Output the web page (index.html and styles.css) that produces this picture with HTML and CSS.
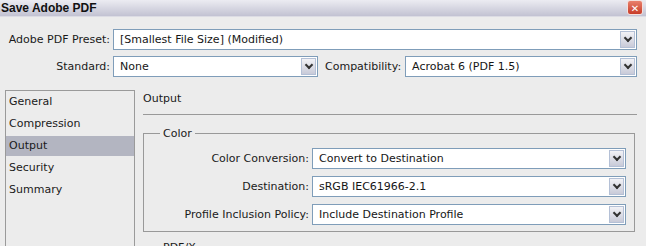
FILE: index.html
```html
<!DOCTYPE html>
<html lang="en">
<head>
    <meta charset="UTF-8">
    <title>Save Adobe PDF</title>
    <link rel="stylesheet" href="styles.css">
</head>
<body>
    <div class="titlebar">
        <span class="title">Save Adobe PDF</span>
        <span class="close">&#x2715;</span>
    </div>
    <div class="dialog">
        <div class="row">
            <label class="lbl">Adobe PDF Preset:</label>
            <div class="combo wide"><span>[Smallest File Size] (Modified)</span><i class="arrow"></i></div>
        </div>
        <div class="row">
            <label class="lbl">Standard:</label>
            <div class="combo std"><span>None</span><i class="arrow"></i></div>
            <label class="lbl2">Compatibility:</label>
            <div class="combo wide"><span>Acrobat 6 (PDF 1.5)</span><i class="arrow"></i></div>
        </div>
        <div class="main">
            <ul class="sections">
                <li>General</li>
                <li>Compression</li>
                <li class="active">Output</li>
                <li>Security</li>
                <li>Summary</li>
            </ul>
            <div class="panel">
                <div class="panel-title">Output</div>
                <fieldset class="group">
                    <legend>Color</legend>
                    <div class="frow">
                        <label class="flbl">Color Conversion:</label>
                        <div class="combo wide"><span>Convert to Destination</span><i class="arrow"></i></div>
                    </div>
                    <div class="frow">
                        <label class="flbl">Destination:</label>
                        <div class="combo wide"><span>sRGB IEC61966-2.1</span><i class="arrow"></i></div>
                    </div>
                    <div class="frow">
                        <label class="flbl">Profile Inclusion Policy:</label>
                        <div class="combo wide"><span>Include Destination Profile</span><i class="arrow"></i></div>
                    </div>
                </fieldset>
                <fieldset class="group">
                    <legend>PDF/X</legend>
                </fieldset>
            </div>
        </div>
    </div>
</body>
</html>
```

FILE: styles.css
```css
html, body { margin: 0; padding: 0; }
body { background: #ececec; font-family: "DejaVu Sans", sans-serif; font-size: 11px; color: #1a1a1a; overflow: hidden; width: 646px; height: 246px; }

.titlebar { height: 16px; display: flex; align-items: center; justify-content: space-between; background: linear-gradient(#ececf2, #c2c2d2); border-bottom: 1px solid #dcdce4; padding-left: 1px; }
.title { font-family: "Liberation Sans", sans-serif; font-weight: bold; font-size: 12px; color: #111; }
.close { width: 16px; height: 15px; margin-right: 3px; margin-top: -1px; background: linear-gradient(#e8806c, #c83c28); border: 1px solid #f4e0dc; border-radius: 3px; color: #fff; font-size: 10px; font-weight: bold; line-height: 15px; text-align: center; box-sizing: border-box; }

.dialog { padding: 12px 9px 0 5px; }
.row { display: flex; align-items: center; height: 21px; margin-bottom: 6px; }
.lbl { width: 105px; text-align: right; padding-right: 3px; }
.lbl2 { margin: 0 4px 0 7px; }

.combo { height: 21px; box-sizing: border-box; border: 1px solid #7f9db9; background: #fff; display: flex; align-items: center; justify-content: space-between; padding: 1px 1px 1px 6px; }
.combo span { white-space: nowrap; color: #161616; }
.wide { flex: 1; }
.std { width: 205px; }
.arrow { width: 15px; height: 17px; box-sizing: border-box; border: 1px solid #b4c0d6; background: linear-gradient(#f2f2f6, #c8cad8); position: relative; }
.arrow::after { content: ""; position: absolute; left: 4px; top: 3px; width: 4px; height: 4px; border-right: 2px solid #333; border-bottom: 2px solid #333; transform: rotate(45deg); }

.main { display: flex; margin-top: 13px; }
.sections { list-style: none; margin: 0; padding: 1px 0 0; width: 128px; height: 200px; border: 1px solid #9a9a9a; display: flex; flex-direction: column; gap: 2px; }
.sections li { height: 20px; line-height: 20px; padding-left: 3px; }
.sections li.active { background: #b3b5c1; }

.panel { flex: 1; margin-left: 8px; }
.panel-title { box-sizing: border-box; height: 25px; padding-top: 1px; line-height: 16px; border-bottom: 1px solid #999; }
.group { margin: 12px 2px 0 0; padding: 8px 8px 6px 0; border: 1px solid #999; }
.group + .group { margin-top: 9px; }
.group legend { padding: 0 3px; margin-left: 16px; }
.frow { display: flex; align-items: center; margin-bottom: 7px; }
.frow:last-child { margin-bottom: 0; }
.flbl { width: 165px; text-align: right; padding-right: 3px; }
```
